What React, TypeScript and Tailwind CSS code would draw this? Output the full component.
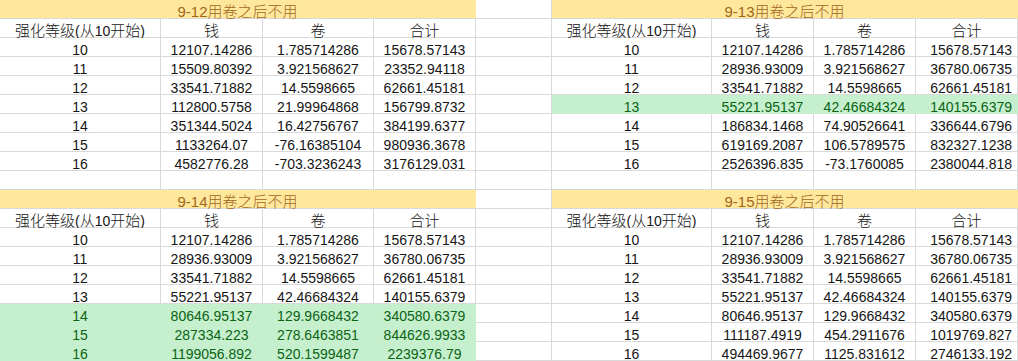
import React from "react";

type Block = {
  title: string;
  rows: [string, string, string][];
  green: number[];
};

const left: Block[] = [
  {
    title: "12",
    rows: [
      ["12107.14286", "1.785714286", "15678.57143"],
      ["15509.80392", "3.921568627", "23352.94118"],
      ["33541.71882", "14.5598665", "62661.45181"],
      ["112800.5758", "21.99964868", "156799.8732"],
      ["351344.5024", "16.42756767", "384199.6377"],
      ["1133264.07", "-76.16385104", "980936.3678"],
      ["4582776.28", "-703.3236243", "3176129.031"],
    ],
    green: [],
  },
  {
    title: "14",
    rows: [
      ["12107.14286", "1.785714286", "15678.57143"],
      ["28936.93009", "3.921568627", "36780.06735"],
      ["33541.71882", "14.5598665", "62661.45181"],
      ["55221.95137", "42.46684324", "140155.6379"],
      ["80646.95137", "129.9668432", "340580.6379"],
      ["287334.223", "278.6463851", "844626.9933"],
      ["1199056.892", "520.1599487", "2239376.79"],
    ],
    green: [4, 5, 6],
  },
];

const right: Block[] = [
  {
    title: "13",
    rows: [
      ["12107.14286", "1.785714286", "15678.57143"],
      ["28936.93009", "3.921568627", "36780.06735"],
      ["33541.71882", "14.5598665", "62661.45181"],
      ["55221.95137", "42.46684324", "140155.6379"],
      ["186834.1468", "74.90526641", "336644.6796"],
      ["619169.2087", "106.5789575", "832327.1238"],
      ["2526396.835", "-73.1760085", "2380044.818"],
    ],
    green: [3],
  },
  {
    title: "15",
    rows: [
      ["12107.14286", "1.785714286", "15678.57143"],
      ["28936.93009", "3.921568627", "36780.06735"],
      ["33541.71882", "14.5598665", "62661.45181"],
      ["55221.95137", "42.46684324", "140155.6379"],
      ["80646.95137", "129.9668432", "340580.6379"],
      ["111187.4919", "454.2911676", "1019769.827"],
      ["494469.9677", "1125.831612", "2746133.192"],
    ],
    green: [],
  },
];

const base =
  "h-[19px] pt-[4px] leading-[16px] text-center whitespace-nowrap border-r border-b";
const white = `${base} bg-white border-[#d9d9d9] text-[#151515]`;
const greenCls = `${base} bg-[#c6efce] border-[#c6efce] text-[#0b6414]`;
const titleCls = `${base} col-span-4 bg-[#ffe89c] border-r-[#ffe89c] border-b-[#d9d9d9] text-[#a0661c]`;

function C({ children }: { children: React.ReactNode }) {
  return <span className="text-[15px] font-light">{children}</span>;
}

function Cell({ cls, children, extra = "" }: { cls: string; children?: React.ReactNode; extra?: string }) {
  return <div className={`${cls} ${extra}`}>{children}</div>;
}

export default function App() {
  const cells: React.ReactNode[] = [];
  let k = 0;
  const pushBlockRow = (
    b: Block,
    rowType: "title" | "header" | "data",
    idx: number,
    isRight: boolean
  ) => {
    const lastExtra = isRight ? "!text-right pr-[5px]" : "";
    if (rowType === "title") {
      cells.push(
        <div key={k++} className={titleCls}>
          <span className="text-[15px]">9-{b.title}</span>
          <C>用卷之后不用</C>
        </div>
      );
    } else if (rowType === "header") {
      cells.push(
        <Cell key={k++} cls={white}>
          <C>强化等级</C>(<C>从</C>10<C>开始</C>)
        </Cell>
      );
      cells.push(<Cell key={k++} cls={white}><C>钱</C></Cell>);
      cells.push(<Cell key={k++} cls={white}><C>卷</C></Cell>);
      cells.push(<Cell key={k++} cls={white}><C>合计</C></Cell>);
    } else {
      const g = b.green.includes(idx);
      const c = g ? greenCls : white;
      const r = b.rows[idx];
      cells.push(<Cell key={k++} cls={c}>{String(10 + idx)}</Cell>);
      cells.push(<Cell key={k++} cls={c}>{r[0]}</Cell>);
      cells.push(<Cell key={k++} cls={c}>{r[1]}</Cell>);
      cells.push(
        <Cell key={k++} cls={c} extra={lastExtra}>
          {r[2]}
        </Cell>
      );
    }
  };

  for (let bi = 0; bi < 2; bi++) {
    const lb = left[bi];
    const rb = right[bi];
    pushBlockRow(lb, "title", 0, false);
    cells.push(<Cell key={k++} cls={white} />);
    pushBlockRow(rb, "title", 0, true);
    pushBlockRow(lb, "header", 0, false);
    cells.push(<Cell key={k++} cls={white} />);
    pushBlockRow(rb, "header", 0, true);
    for (let i = 0; i < 7; i++) {
      pushBlockRow(lb, "data", i, false);
      cells.push(<Cell key={k++} cls={white} />);
      pushBlockRow(rb, "data", i, true);
    }
    if (bi === 0) {
      for (let j = 0; j < 9; j++) cells.push(<Cell key={k++} cls={white} />);
    }
  }

  return (
    <div
      className="w-[1018px] h-[361px] overflow-hidden bg-white text-[14px]"
      style={{ fontFamily: '"Liberation Sans", "Noto Sans CJK SC", sans-serif' }}
    >
      <div className="grid grid-cols-[161px_102px_111px_102px_76px_160px_102px_102px_102px]">
        {cells}
      </div>
    </div>
  );
}
